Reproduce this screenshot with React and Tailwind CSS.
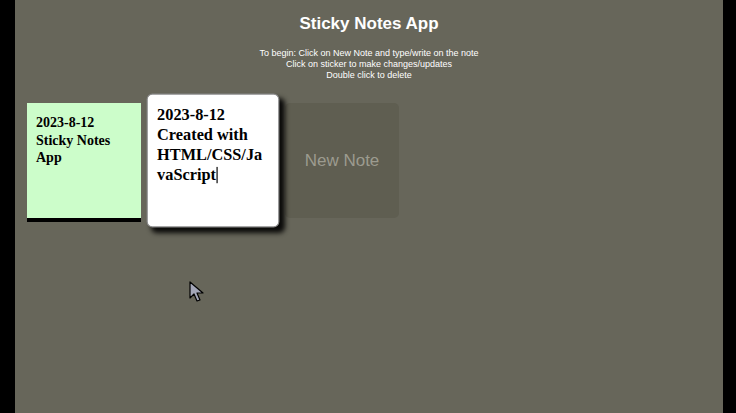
const NOTES = [
  { id: 1, text: '2023-8-12 Sticky Notes App', color: 'bg-[#ccfdca]' },
]

function Cursor() {
  return (
    <svg className="absolute left-[189px] top-[281px]" width="16" height="22" viewBox="0 0 16 22">
      <path d="M1 1 L1 17 L5 13 L8 20 L11 19 L8 12 L14 12 Z" fill="#a3a6b8" stroke="#000" strokeWidth="1.2" strokeLinejoin="round" />
    </svg>
  )
}

export default function App() {
  return (
    <div className="relative flex h-[413px] w-[736px] bg-black">
      <div className="ml-[15px] h-full w-[708px] bg-[#67665a] font-['Liberation_Sans',Arial,sans-serif] text-white">
        <h1 className="pt-[13px] text-center text-[17px] font-bold leading-[22px]">Sticky Notes App</h1>
        <div className="mt-[13px] text-center text-[9px] leading-[11px]">
          <p>To begin: Click on New Note and type/write on the note</p>
          <p>Click on sticker to make changes/updates</p>
          <p>Double click to delete</p>
        </div>

        <div className="ml-[12px] mt-[22px] flex gap-[15px]">
          {NOTES.map(note => (
            <div
              key={note.id}
              className={`h-[115px] w-[114px] px-[9px] pt-[11px] font-['Liberation_Serif','Times_New_Roman',serif] text-[14px] font-bold leading-[17.5px] text-black shadow-[0_4px_0_#000] ${note.color}`}
            >
              {note.text}
            </div>
          ))}

          <div className="relative z-10 h-[115px] w-[114px] scale-[1.165] rounded-[5px] border border-[#8a8a8a] bg-white p-[8px] pt-[9px] font-['Liberation_Serif','Times_New_Roman',serif] text-[14px] font-bold leading-[17px] text-black shadow-[4px_4px_5px_rgba(0,0,0,0.9)] [overflow-wrap:break-word]">
            2023-8-12 Created with HTML/CSS/JavaScript<span className="inline-block h-[14px] w-px bg-black align-[-3px]" />
          </div>

          <div className="flex h-[115px] w-[114px] items-center justify-center rounded-[5px] bg-[#5f5e51] text-[17px] text-[#9c9b8f]">
            New Note
          </div>
        </div>
      </div>
      <Cursor />
    </div>
  )
}
